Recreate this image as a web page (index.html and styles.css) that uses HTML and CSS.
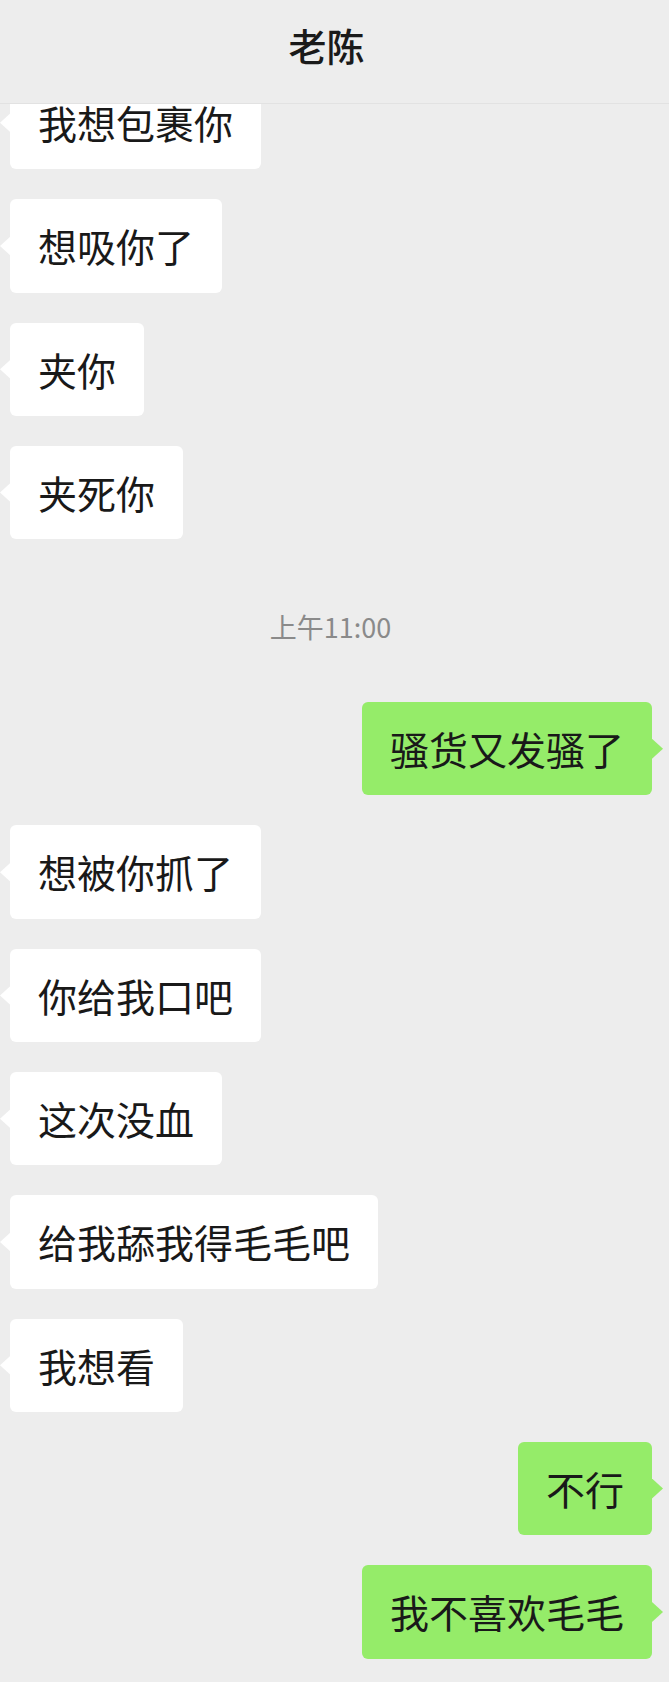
FILE: index.html
```html
<!DOCTYPE html>
<html lang="zh-CN">
<head>
    <meta charset="utf-8">
    <title>老陈</title>
    <link rel="stylesheet" href="styles.css">
</head>
<body>

    <div class="screen">
        <header class="title-bar">老陈</header>

        <div class="chat">
            <div class="msg msg-left"><div class="bubble">我想包裹你</div></div>
            <div class="msg msg-left"><div class="bubble">想吸你了</div></div>
            <div class="msg msg-left"><div class="bubble">夹你</div></div>
            <div class="msg msg-left"><div class="bubble">夹死你</div></div>

            <div class="time">上午11:00</div>

            <div class="msg msg-right"><div class="bubble">骚货又发骚了</div></div>
            <div class="msg msg-left"><div class="bubble">想被你抓了</div></div>
            <div class="msg msg-left"><div class="bubble">你给我口吧</div></div>
            <div class="msg msg-left"><div class="bubble">这次没血</div></div>
            <div class="msg msg-left"><div class="bubble">给我舔我得毛毛吧</div></div>
            <div class="msg msg-left"><div class="bubble">我想看</div></div>
            <div class="msg msg-right"><div class="bubble">不行</div></div>
            <div class="msg msg-right"><div class="bubble">我不喜欢毛毛</div></div>
        </div>
    </div>

</body>
</html>
```

FILE: styles.css
```css
body {
    margin: 0;
    background-color: #ededed;
    font-family: "Noto Sans CJK SC", "Noto Sans", sans-serif;
    color: #191919;
}

.screen {
    position: relative;
    height: 1682px;
    overflow: hidden;
}

/* top bar lies over the scrolled messages */
.title-bar {
    position: absolute;
    top: 0;
    left: 0;
    right: 0;
    z-index: 5;
    height: 90px;
    line-height: 90px;
    padding: 0 16px 13px 0;
    text-align: center;
    font-size: 38px;
    font-weight: 500;
    color: #1a1a1a;
    background-color: #ededed;
    border-bottom: 1px solid #e2e2e2;
}

.chat {
    padding-top: 76px;
}

.msg {
    display: flex;
    margin-bottom: 30px;
}

.msg-left {
    padding-left: 10px;
}

.msg-right {
    justify-content: flex-end;
    padding-right: 17px;
}

.bubble {
    position: relative;
    padding: 19px 28px;
    font-size: 39px;
    line-height: 55.3px;
    border-radius: 6px;
    background-color: #fff;
    white-space: nowrap;
}

.bubble::before {
    content: "";
    position: absolute;
    top: 50%;
    margin-top: -10px;
    width: 11px;
    height: 20px;
    background-color: inherit;
}

.msg-left .bubble::before {
    left: -10px;
    clip-path: polygon(100% 0, 0 50%, 100% 100%);
}

.msg-right .bubble {
    background-color: #95ec69;
}

.msg-right .bubble::before {
    right: -11px;
    clip-path: polygon(0 0, 100% 50%, 0 100%);
}

.time {
    padding: 40px 8px 0 0;
    margin-bottom: 57px;
    line-height: 36px;
    font-size: 27px;
    text-align: center;
    color: #8a8a8a;
}
```
